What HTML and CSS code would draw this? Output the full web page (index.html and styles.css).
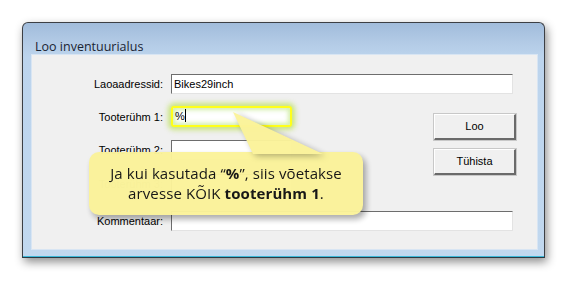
FILE: index.html
```html
<!DOCTYPE html>
<html>
<head>
<meta charset="utf-8">
<link rel="stylesheet" href="styles.css">
</head>
<body>
<div class="page">
  <div class="window">
    <div class="titlebar">Loo inventuurialus</div>
    <div class="client">
      <div class="form">
        <label class="lbl r1">Laoaadressid:</label>
        <div class="inp long r1">Bikes29inch</div>
        <label class="lbl r2">Tooterühm 1:</label>
        <div class="inp short r2 hl">%<span class="caret"></span></div>
        <label class="lbl r3">Tooterühm 2:</label>
        <div class="inp short r3"></div>
        <label class="lbl r4 faint">Tooterühm 3:</label>
        <div class="inp short r4"></div>
        <label class="lbl r5">Kommentaar:</label>
        <div class="inp long r5"></div>
        <div class="buttons">
          <div class="btn">Loo</div>
          <div class="btn">Tühista</div>
        </div>
      </div>
      <div class="callout">
        <svg class="tail" width="100" height="44" viewBox="0 0 100 44">
          <polygon points="10,0 30,42 100,42" fill="#fbf39a"/>
        </svg>
        <p>Ja kui kasutada “<b>%</b>”, siis võetakse<br>arvesse KÕIK <b>tooterühm 1</b>.</p>
      </div>
    </div>
  </div>
</div>
</body>
</html>
```
FILE: styles.css
```css
html, body { margin: 0; padding: 0; background: #ffffff; }
.page { padding: 22px 23px 23px 22px; width: 523px; }
.window {
  position: relative;
  width: 505px;
  height: 226px;
  border: 1px solid #3c3f44;
  border-radius: 6px 6px 0 0;
  background: linear-gradient(#a1bcdb 0px, #b3cbe6 20px, #bcd4ed 34px, #c1d8ef 100%);
  box-shadow: 2px 4px 10px rgba(0,0,0,0.45);
  padding: 0 7px 8px 9px;
  box-sizing: content-box;
  border-bottom: 1px solid #2a3a44;
}
.window::after {
  content: "";
  position: absolute;
  left: 0; right: 0; bottom: 0; height: 1px;
  background: #3cb8d8;
}
.titlebar {
  height: 32px;
  font-family: "Open Sans", "Liberation Sans", sans-serif;
  font-size: 12.5px;
  color: #1a2433;
  line-height: 18px;
  padding: 15px 0 0 3px;
  box-sizing: border-box;
}
.client {
  position: relative;
  width: 505px;
  height: 194px;
  background: #f0f0f0;
  box-shadow: 0 0 0 1px #d8e5f3;
  padding-top: 19px;
  box-sizing: border-box;
}
.form {
  display: grid;
  grid-template-columns: 131px 121px 1fr 82px;
  grid-template-rows: 33px 33px 34px 37px 20px;
  column-gap: 8px;
  font-family: "Liberation Sans", Arial, sans-serif;
  font-size: 11px;
  color: #000;
  padding-right: 21px;
}
.lbl { grid-column: 1; text-align: right; line-height: 20px; height: 20px; align-self: start; }
.faint { color: #8a8a8a; }
.r1 { grid-row: 1; } .r2 { grid-row: 2; } .r3 { grid-row: 3; } .r4 { grid-row: 4; } .r5 { grid-row: 5; }
.inp {
  align-self: start;
  height: 20px;
  box-sizing: border-box;
  background: #fff;
  border-top: 1px solid #6d6d6d;
  border-left: 1px solid #6d6d6d;
  border-right: 1px solid #e3e3e3;
  border-bottom: 1px solid #e3e3e3;
  line-height: 18px;
  padding-left: 2px;
  font-size: 11px;
}
.long { grid-column: 2 / 5; margin-right: 3px; }
.short { grid-column: 2; }
.hl {
  border: 2px solid #ffff1a;
  border-radius: 3px;
  height: 21px;
  margin-top: -1px;
  line-height: 17px;
  padding-left: 2px;
  box-shadow: 0 0 5px 3px rgba(190,225,90,0.75), inset 0 0 4px 2px rgba(200,235,150,0.8);
}
.caret { display: inline-block; width: 1px; height: 13px; background: #000; vertical-align: -2px; }
.buttons {
  grid-column: 4;
  grid-row: 2 / 5;
  display: flex;
  flex-direction: column;
  gap: 9px;
  margin-top: 7px;
}
.btn {
  height: 26px;
  box-sizing: border-box;
  background: #f0f0f0;
  border-top: 1px solid #ffffff;
  border-left: 1px solid #ffffff;
  border-right: 2px solid #6a6a6a;
  border-bottom: 2px solid #6a6a6a;
  box-shadow: 0 0 0 1px #c8c8c8;
  text-align: center;
  line-height: 23px;
  font-size: 11px;
}
.callout {
  position: absolute;
  left: 57px;
  top: 97px;
  width: 274px;
  height: 63px;
  background: #fbf39a;
  border-radius: 10px;
  box-shadow: 3px 4px 6px rgba(0,0,0,0.35);
  opacity: 0.97;
}
.tail {
  position: absolute;
  left: 134px;
  top: -40px;
  filter: drop-shadow(3px 2px 3px rgba(0,0,0,0.3));
}
.callout p {
  position: relative;
  margin: 0;
  padding-top: 11px;
  text-align: center;
  font-family: "Open Sans", "Liberation Sans", sans-serif;
  font-size: 15px;
  line-height: 20px;
  letter-spacing: 0.1px;
  color: #111;
}
.callout b { font-weight: 700; }
```
